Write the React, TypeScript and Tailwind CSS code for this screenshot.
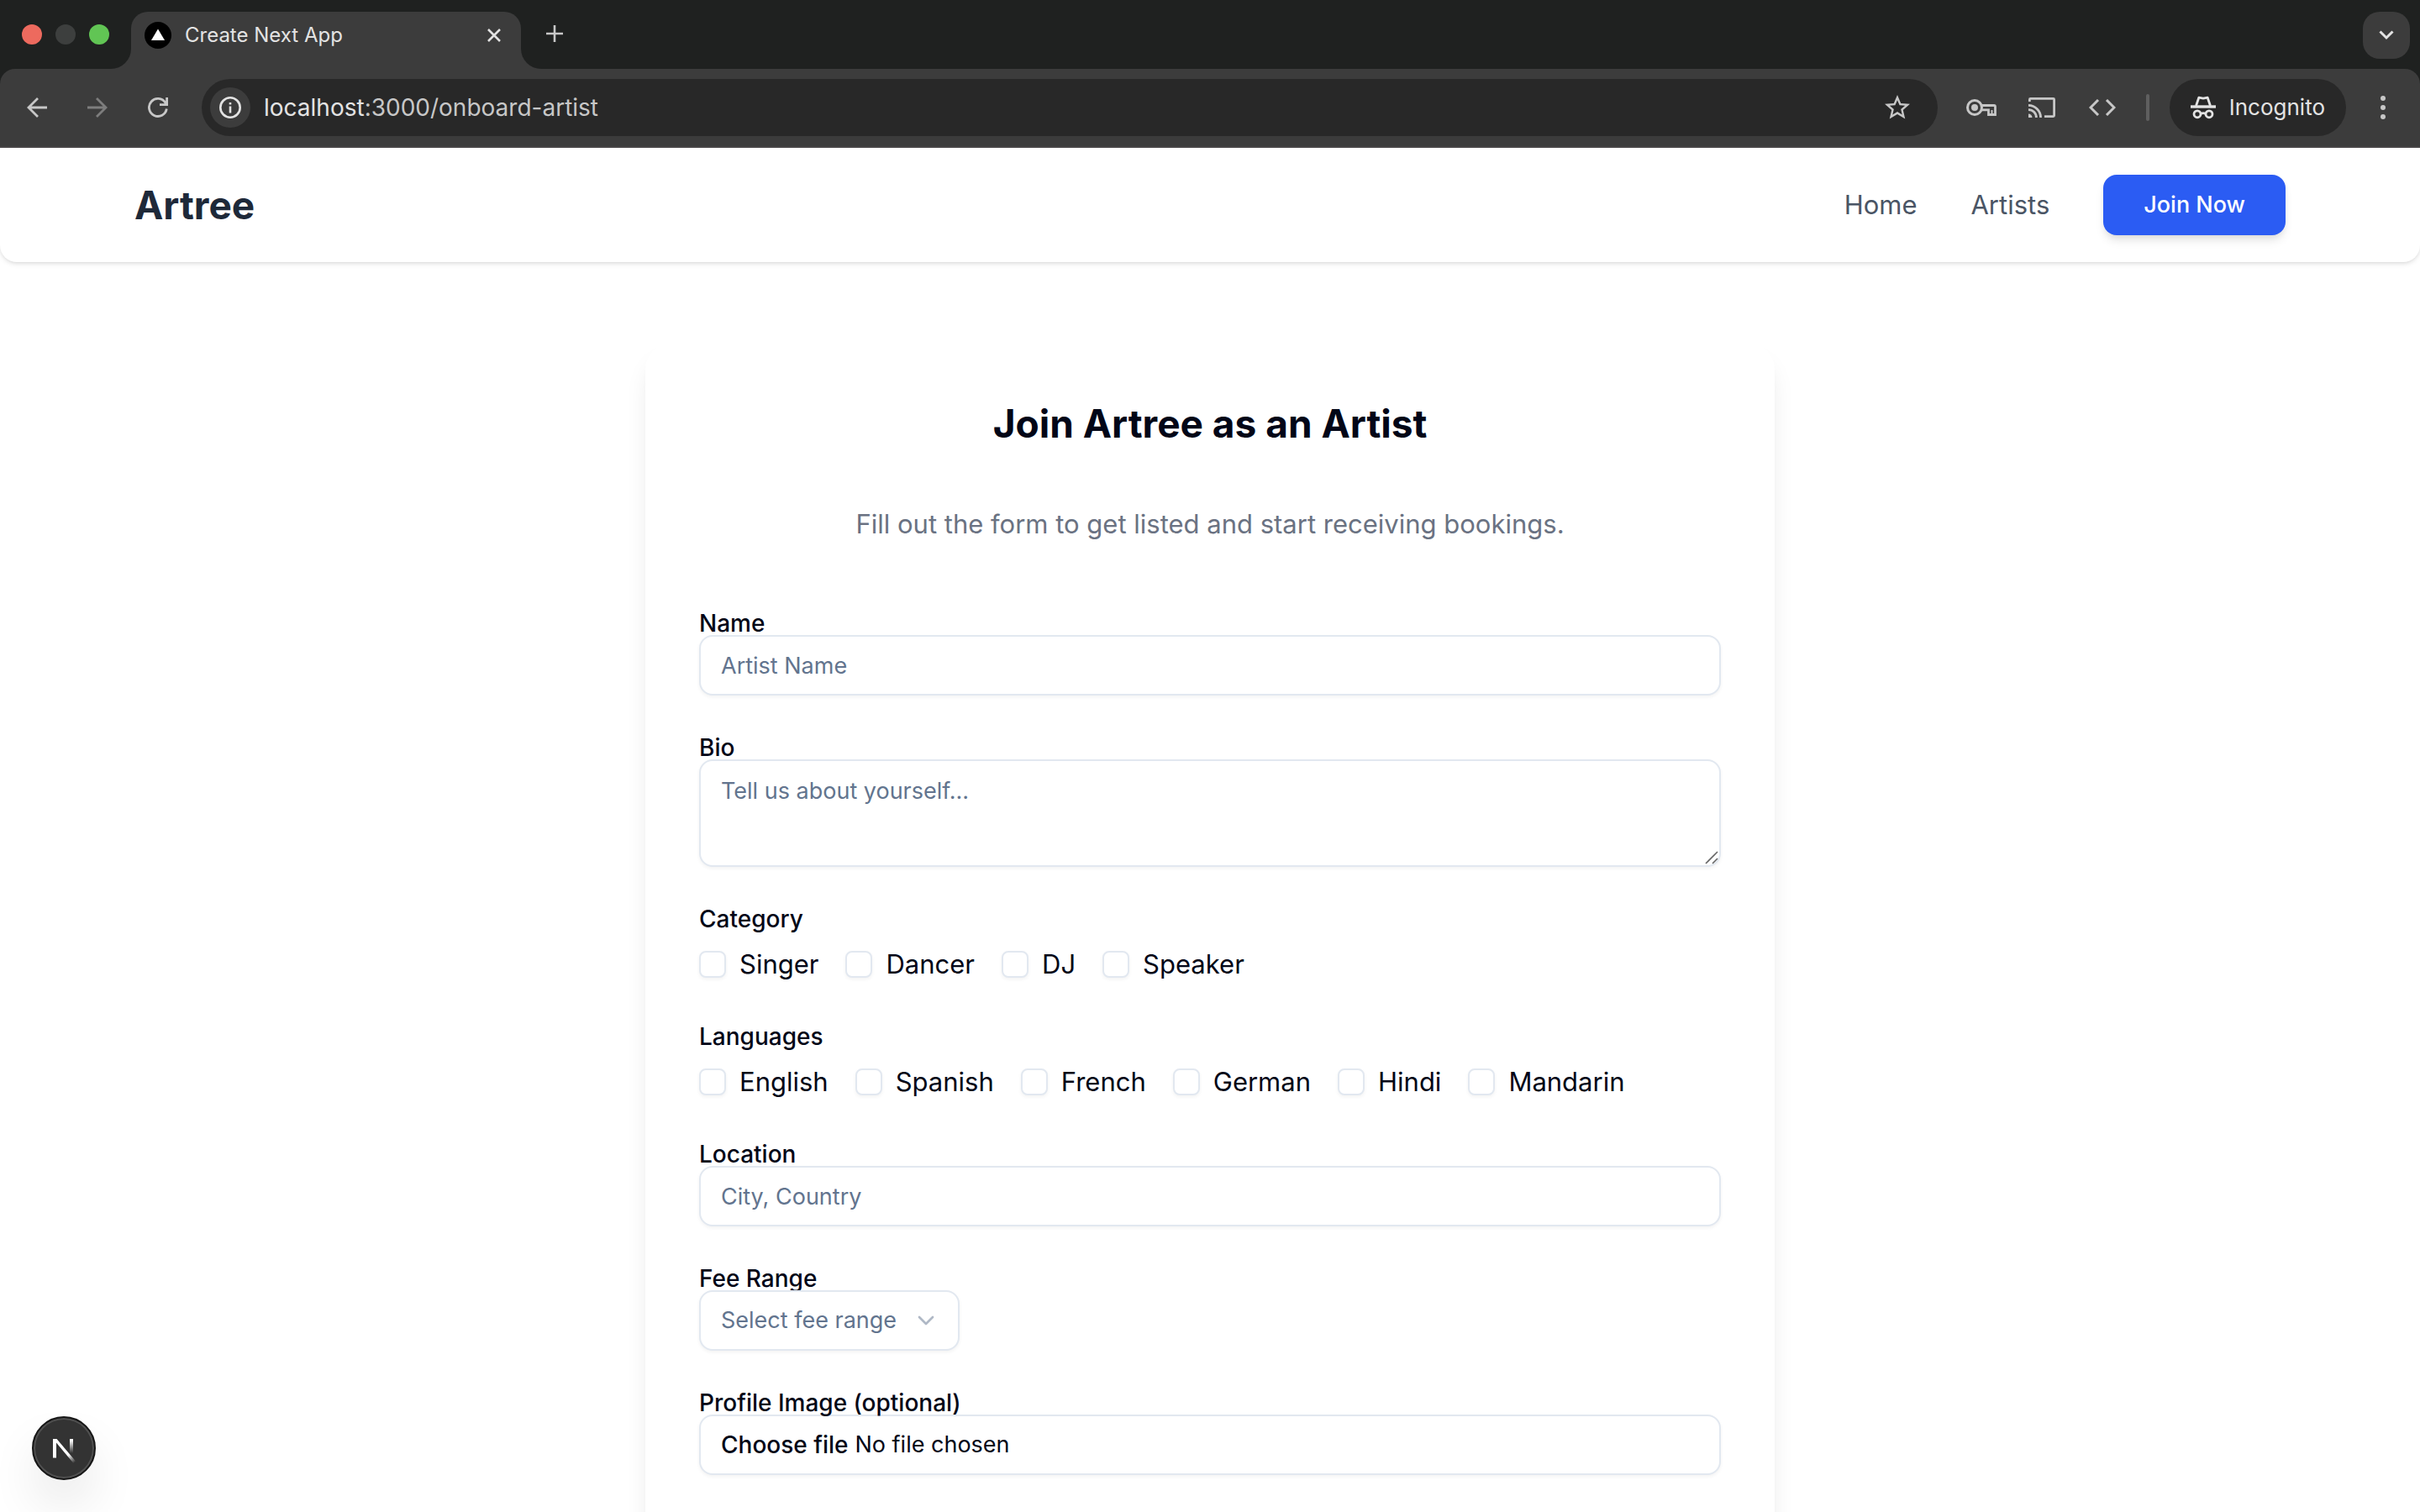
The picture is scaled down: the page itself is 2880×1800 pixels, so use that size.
import type { ReactNode } from "react";
import { MdStarBorder } from "react-icons/md";

const fieldClass =
  "h-18 w-full rounded-2xl border-2 border-[#e2e8f0] bg-white px-6 text-[27px] leading-10 text-[#020617] shadow-[0_2px_4px_rgba(0,0,0,0.05)] outline-none placeholder:text-[#62748e] placeholder:opacity-100";
const labelClass = "block w-fit text-[28px] leading-7 font-medium text-[#020617]";

function IconButton({ label, children }: { label: string; children: ReactNode }) {
  return (
    <button type="button" aria-label={label} className="flex size-12 shrink-0 items-center justify-center text-[#c7c7c7]">
      {children}
    </button>
  );
}

function TabStrip() {
  return (
    <div className="flex h-[82px] items-end bg-[#1f2120]">
      <div className="flex h-[82px] items-center gap-4 pr-[50px] pl-[26px]">
        <span className="size-6 rounded-full bg-[#ed6a5e]" />
        <span className="size-6 rounded-full bg-[#3d3f3e]" />
        <span className="size-6 rounded-full bg-[#61c554]" />
      </div>
      <div className="relative -ml-6 flex h-[68px] w-[464px] items-start rounded-t-[20px] bg-[#3c3c3c] pt-3 pr-6 pl-4">
        <span className="absolute bottom-0 -left-6 size-6 bg-[#3c3c3c]">
          <span className="block size-6 rounded-br-[24px] bg-[#1f2120]" />
        </span>
        <span className="absolute -right-6 bottom-0 size-6 bg-[#3c3c3c]">
          <span className="block size-6 rounded-bl-[24px] bg-[#1f2120]" />
        </span>
        <svg width="32" height="32" viewBox="0 0 32 32" className="shrink-0">
          <circle cx="16" cy="16" r="16" fill="#000" />
          <path d="M16 8.5 24 22H8Z" fill="#fff" />
        </svg>
        <span className="ml-4 flex-1 text-[24px] leading-8 text-[#e3e3e3]">Create Next App</span>
        <button type="button" aria-label="Close tab" className="flex h-8 w-4 items-center justify-center text-[#e3e3e3]">
          <svg width="16" height="16" viewBox="0 0 16 16" fill="none" stroke="currentColor" strokeWidth="2.6">
            <path d="M1 1 15 15M15 1 1 15" />
          </svg>
        </button>
      </div>
      <button type="button" aria-label="New tab" className="mb-8 ml-[30px] flex size-5 items-center justify-center text-[#c7c7c7]">
        <svg width="20" height="20" viewBox="0 0 20 20" fill="none" stroke="currentColor" strokeWidth="2.6">
          <path d="M10 0V20M0 10H20" />
        </svg>
      </button>
      <button type="button" aria-label="Search tabs" className="mr-3 mb-3 ml-auto flex size-14 items-center justify-center rounded-[20px] bg-[#3c3c3c] text-[#e3e3e3]">
        <svg width="18" height="12" viewBox="0 0 18 12" fill="none" stroke="currentColor" strokeWidth="3">
          <path d="M1.5 1.5 9 9 16.5 1.5" />
        </svg>
      </button>
    </div>
  );
}

function Toolbar() {
  return (
    <div className="bg-[#1f2120]">
      <div className="flex h-[94px] items-center gap-6 rounded-t-[18px] border-b-2 border-[#474546] bg-[#3c3c3c] pr-6 pl-5">
        <IconButton label="Back">
          <svg width="24" height="24" viewBox="0 0 24 24" fill="none" stroke="currentColor" strokeWidth="2.8">
            <path d="M24 12H2M13 1 2 12 13 23" />
          </svg>
        </IconButton>
        <IconButton label="Forward">
          <svg width="24" height="24" viewBox="0 0 24 24" fill="none" stroke="#7d7d7d" strokeWidth="2.8">
            <path d="M0 12H22M11 1 22 12 11 23" />
          </svg>
        </IconButton>
        <IconButton label="Reload">
          <svg width="24" height="24" viewBox="0 0 24 24" fill="none" stroke="currentColor" strokeWidth="2.8">
            <path d="M22.3 13.5A10.5 10.5 0 1 1 20.8 6.3L22 8.5M22.6 0V8.6H14" />
          </svg>
        </IconButton>
        <div className="ml-1 flex h-[68px] flex-1 items-center rounded-full bg-[#282828] pr-[30px] pl-2.5">
          <button type="button" aria-label="View site information" className="flex size-12 items-center justify-center rounded-full bg-[#3c3c3c] text-[#e3e3e3]">
            <svg width="26" height="26" viewBox="0 0 26 26" fill="none" stroke="currentColor" strokeWidth="2.6">
              <circle cx="13" cy="13" r="11.7" />
              <path d="M13 11.5V19.5M13 7V9.6" />
            </svg>
          </button>
          <div className="ml-4 flex-1 text-[28px] leading-10 text-[#c7c7c7]">
            <span className="text-[#e3e3e3]">localhost</span>:3000/onboard-artist
          </div>
          <button type="button" aria-label="Bookmark this tab" className="text-[#c7c7c7]">
            <MdStarBorder size={36} />
          </button>
        </div>
        <div className="ml-1 flex gap-6">
          <IconButton label="Passwords">
            <svg width="36" height="20" viewBox="0 0 36 20" fill="none" stroke="currentColor" strokeWidth="3">
              <circle cx="10" cy="10" r="8.5" />
              <circle cx="10" cy="10" r="4" fill="currentColor" stroke="none" />
              <path d="M18 7.5H33A1.5 1.5 0 0 1 34.5 9V18.5H26.5V12.8H18" strokeWidth="2.8" />
              <path d="M30.5 13V19" strokeWidth="2" />
            </svg>
          </IconButton>
          <IconButton label="Cast">
            <svg width="32" height="24" viewBox="0 0 32 24" fill="none" stroke="currentColor" strokeWidth="2.8">
              <path d="M1.4 5V2.4A1 1 0 0 1 2.4 1.4H29.6A1 1 0 0 1 30.6 2.4V21.6A1 1 0 0 1 29.6 22.6H19" />
              <path d="M0 9.4A14.6 14.6 0 0 1 14.6 24M0 14.6A9.4 9.4 0 0 1 9.4 24" />
              <path d="M0 19.5A4.5 4.5 0 0 1 4.5 24H0Z" fill="currentColor" stroke="none" />
            </svg>
          </IconButton>
          <IconButton label="Developer tools">
            <svg width="32" height="20" viewBox="0 0 32 20" fill="none" stroke="currentColor" strokeWidth="3">
              <path d="M11 1 2 10 11 19M21 1 30 10 21 19" />
            </svg>
          </IconButton>
        </div>
        <span className="ml-1 h-8 w-1 rounded-full bg-[#5f5f5f]" />
        <div className="flex h-[68px] items-center gap-4 rounded-full bg-[#282828] px-[25px] text-[#e3e3e3]">
          <svg width="30" height="28" viewBox="0 0 30 28" fill="none" stroke="currentColor" strokeWidth="2.8">
            <path d="M0 13H30" strokeWidth="3.4" />
            <path d="M6.5 12 9.8 2.2 15 3.2 20.2 2.2 23.5 12" strokeLinejoin="round" />
            <circle cx="8" cy="21.8" r="4" />
            <circle cx="22" cy="21.8" r="4" />
            <path d="M12 21.5Q15 19.8 18 21.5" />
          </svg>
          <span className="text-[26px] leading-8">Incognito</span>
        </div>
        <button type="button" aria-label="Browser menu" className="flex size-10 items-center justify-center text-[#c7c7c7]">
          <svg width="6" height="28" viewBox="0 0 6 28" fill="currentColor">
            <circle cx="3" cy="3" r="3" />
            <circle cx="3" cy="14" r="3" />
            <circle cx="3" cy="25" r="3" />
          </svg>
        </button>
      </div>
    </div>
  );
}

function Navbar() {
  return (
    <nav className="rounded-b-[20px] bg-white shadow-[0_2px_6px_rgba(0,0,0,0.1),0_2px_4px_-2px_rgba(0,0,0,0.1)]">
      <div className="mx-auto flex max-w-[2560px] items-center justify-between py-8">
        <a href="#home" className="text-[46px] leading-[72px] font-bold text-[#1e2939]">
          Artree
        </a>
        <div className="flex items-center gap-16 text-[31px] leading-12 text-[#4a5565]">
          <a href="#home">Home</a>
          <a href="#artists">Artists</a>
          <button type="button" className="h-18 rounded-2xl bg-[#2b5cf3] px-12 text-[27px] leading-10 font-medium text-white shadow-[0_8px_12px_-2px_rgba(0,0,0,0.1),0_4px_8px_-4px_rgba(0,0,0,0.1)]">
            Join Now
          </button>
        </div>
      </div>
    </nav>
  );
}

function CheckGroup({ legend, options }: { legend: string; options: string[] }) {
  return (
    <fieldset>
      <legend className={labelClass}>{legend}</legend>
      <div className="mt-4 flex flex-wrap gap-8">
        {options.map((option) => (
          <label key={option} className="flex items-center gap-4 text-[31px] leading-12 text-[#020617]">
            <input
              type="checkbox"
              className="size-8 appearance-none rounded-lg border-2 border-[#e2e8f0] bg-white shadow-[0_2px_4px_rgba(0,0,0,0.05)] checked:bg-[#0f172b]"
            />
            {option}
          </label>
        ))}
      </div>
    </fieldset>
  );
}

function ArtistForm() {
  return (
    <form className="mt-20 flex flex-col gap-12">
      <div>
        <label htmlFor="name" className={labelClass}>Name</label>
        <input id="name" type="text" placeholder="Artist Name" className={fieldClass} />
      </div>
      <div>
        <label htmlFor="bio" className={labelClass}>Bio</label>
        <div className="relative">
          <textarea
            id="bio"
            placeholder="Tell us about yourself..."
            className="block h-32 w-full resize-none rounded-2xl border-2 border-[#e2e8f0] bg-white px-6 py-4 text-[27px] leading-10 text-[#020617] shadow-[0_2px_4px_rgba(0,0,0,0.05)] outline-none placeholder:text-[#62748e] placeholder:opacity-100"
          />
          <svg width="16" height="16" viewBox="0 0 16 16" fill="none" stroke="#666" strokeWidth="1.6" className="pointer-events-none absolute right-[3px] bottom-[3px]">
            <path d="M1 15 15 1M9 15 15 9" />
          </svg>
        </div>
      </div>
      <CheckGroup legend="Category" options={["Singer", "Dancer", "DJ", "Speaker"]} />
      <CheckGroup legend="Languages" options={["English", "Spanish", "French", "German", "Hindi", "Mandarin"]} />
      <div>
        <label htmlFor="location" className={labelClass}>Location</label>
        <input id="location" type="text" placeholder="City, Country" className={fieldClass} />
      </div>
      <div>
        <label htmlFor="fee" className={labelClass}>Fee Range</label>
        <div className="relative w-fit">
          <select
            id="fee"
            defaultValue=""
            className="block h-18 appearance-none rounded-2xl border-2 border-[#e2e8f0] bg-white pr-[72px] pl-6 text-[27px] leading-10 text-[#62748e] shadow-[0_2px_4px_rgba(0,0,0,0.05)] outline-none"
          >
            <option value="">Select fee range</option>
          </select>
          <svg width="32" height="32" viewBox="0 0 24 24" fill="none" stroke="#62748e" strokeWidth="2" strokeLinecap="round" strokeLinejoin="round" className="pointer-events-none absolute top-5 right-6 opacity-50">
            <path d="m6 9 6 6 6-6" />
          </svg>
        </div>
      </div>
      <div>
        <label htmlFor="photo" className={labelClass}>Profile Image (optional)</label>
        <label htmlFor="photo" className="flex h-18 w-full items-center gap-2 rounded-2xl border-2 border-[#e2e8f0] bg-white px-6 text-[27px] leading-10 text-[#020617] shadow-[0_2px_4px_rgba(0,0,0,0.05)]">
          <span className="text-[28px] font-medium">Choose file</span>
          <span>No file chosen</span>
        </label>
        <input id="photo" type="file" className="sr-only" />
      </div>
    </form>
  );
}

export default function App() {
  return (
    <div className="relative flex h-screen flex-col overflow-hidden bg-white font-[Inter,'Liberation_Sans',sans-serif]">
      <header>
        <TabStrip />
        <Toolbar />
      </header>
      <div className="min-h-0 flex-1 overflow-hidden">
        <Navbar />
        <main className="px-8 py-24">
          <section className="mx-auto max-w-[1344px] rounded-[32px] bg-white p-16 pb-40 shadow-[0_20px_30px_-6px_rgba(0,0,0,0.1),0_8px_12px_-8px_rgba(0,0,0,0.1)]">
            <h1 className="text-center text-[46px] leading-16 font-bold text-[#020617]">Join Artree as an Artist</h1>
            <p className="mt-16 text-center text-[31px] leading-12 text-[#6a7282]">
              Fill out the form to get listed and start receiving bookings.
            </p>
            <ArtistForm />
          </section>
        </main>
      </div>
      <button
        type="button"
        aria-label="Open Next.js Dev Tools"
        className="absolute bottom-[38px] left-[38px] size-[76px] rounded-full border-2 border-[#171717] bg-[#333] shadow-[inset_0_0_0_2px_#505050,0_32px_64px_-16px_rgba(0,0,0,0.24)]"
      >
        <svg width="72" height="72" viewBox="0 0 72 72" fill="none" className="block">
          <defs>
            <linearGradient id="diag" gradientUnits="userSpaceOnUse" x1="38" y1="40" x2="49" y2="53">
              <stop offset="0.3" stopColor="#fff" />
              <stop offset="1" stopColor="#fff" stopOpacity="0" />
            </linearGradient>
            <linearGradient id="stem" gradientUnits="userSpaceOnUse" x1="45" y1="25" x2="45" y2="42">
              <stop offset="0.1" stopColor="#fff" />
              <stop offset="1" stopColor="#fff" stopOpacity="0" />
            </linearGradient>
          </defs>
          <path d="M23 25H27.5L50 51.5 47.5 54 27 29.5V47.5H23Z" fill="url(#diag)" />
          <path d="M43 25H47V42H43Z" fill="url(#stem)" />
        </svg>
      </button>
    </div>
  );
}
